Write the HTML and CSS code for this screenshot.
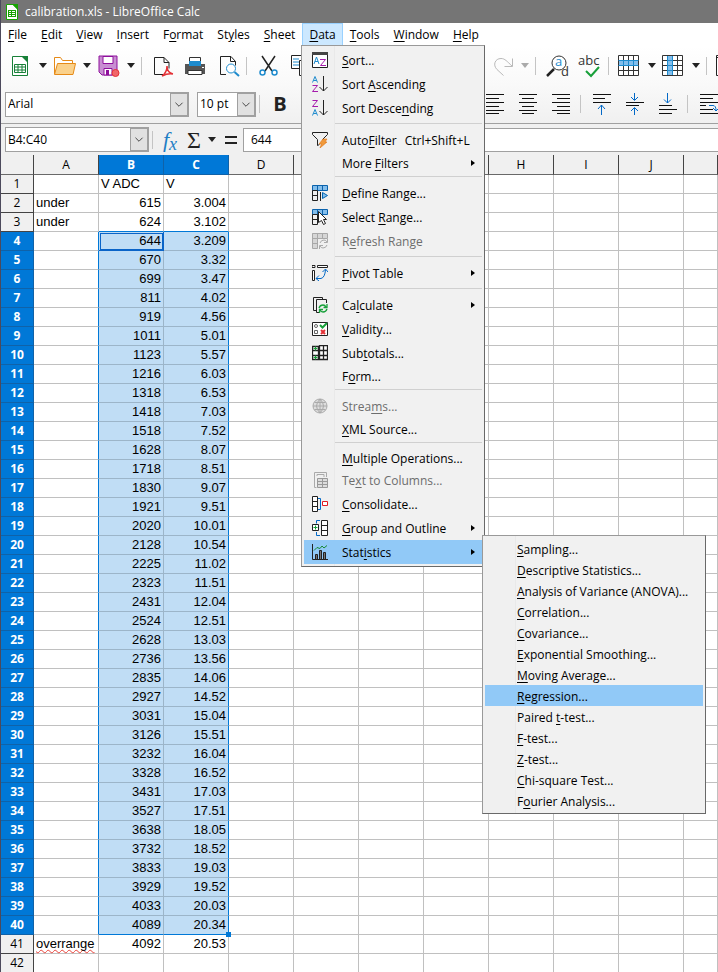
FILE: index.html
```html
<!DOCTYPE html>
<html lang="en">
<head>
<meta charset="utf-8">
<title>calibration.xls - LibreOffice Calc</title>
<link rel="stylesheet" href="styles.css">
</head>
<body>
<div class="window">
<header class="titlebar">
  <svg class="app-icon" width="12" height="16" viewBox="0 0 12 16"><path d="M.5.5H7l4.500 4.500v10.500H.5z" fill="#fff" stroke="#18a303"/><path d="M6 0h6v6z" fill="#18a303"/><path d="M2 6h8v7H2z" fill="#18a303"/><path d="M3 7h2v1H3zM6 7h3v1H6zM3 9h2v1H3zM6 9h3v1H6zM3 11h2v1H3zM6 11h3v1H6z" fill="#fff"/></svg>
  <span>calibration.xls - LibreOffice Calc</span>
</header>

<nav class="menubar">
  <button><u>F</u>ile</button><button><u>E</u>dit</button><button><u>V</u>iew</button><button><u>I</u>nsert</button><button>F<u>o</u>rmat</button><button>St<u>y</u>les</button><button><u>S</u>heet</button><button class="open"><u>D</u>ata</button><button><u>T</u>ools</button><button><u>W</u>indow</button><button><u>H</u>elp</button>
</nav>

<div class="toolbar standard">
  <div class="tools">
    <button class="icon" aria-label="New"><svg viewBox="0 0 24 24"><path d="M3.500 2.500H14l4.500 5v14h-15z" fill="#fff" stroke="#188038"/><path d="M12 2h7v7z" fill="#188038"/><path d="M5.500 10.500h11v8h-11zM5.500 13h11M5.500 16h11M9 10.500v8M13 10.500v8" fill="none" stroke="#188038"/></svg></button>
    <button class="drop" aria-label="New options"></button>
    <button class="icon" aria-label="Open"><svg viewBox="0 0 24 24"><path d="M1.500 20V3.500h6l2 3h10v4" fill="#fff" stroke="#e68a17"/><path d="M1.500 20.500l3-11H22.500l-2.500 11z" fill="#fad18b" stroke="#e68a17"/></svg></button>
    <button class="drop" aria-label="Open options"></button>
    <button class="icon" aria-label="Save"><svg viewBox="0 0 24 24"><path d="M2 2h18v19H5l-3-3z" fill="#c88fd2" stroke="#8f109c"/><path d="M6 2.500h10v7H6z" fill="#fff" stroke="#8f109c"/><path d="M7 14.500h8V21H7z" fill="#fff" stroke="#8f109c"/><path d="M9 16h3v5H9z" fill="#8f109c"/><circle cx="18.500" cy="19" r="3.500" fill="#f0666a" stroke="#e43136"/></svg></button>
    <button class="drop" aria-label="Save options"></button>
    <i class="sep"></i>
    <button class="icon" aria-label="Export as PDF"><svg viewBox="0 0 24 24"><path d="M12 20.500H3.500v-17H13l5 5v6M13 3.500v5h5" fill="none" stroke="#222"/><path d="M11 22c3-2 5-6 5-10 0 4 2 7 6 8-4-1-7 0-11 2z" fill="none" stroke="#e43136" stroke-width="1.500"/></svg></button>
    <button class="icon" aria-label="Print"><svg viewBox="0 0 24 24"><path d="M6.500 10V3.500h11V10" fill="#fff" stroke="#333"/><path d="M2 10h20v10H2z" fill="#555"/><path d="M6 7h12v5H6z" fill="#1e8bcd"/><path d="M5 16.500h14v4H5z" fill="#fff" stroke="#333"/><path d="M19 13h2v1h-2z" fill="#fff"/></svg></button>
    <button class="icon" aria-label="Print Preview"><svg viewBox="0 0 24 24"><path d="M11 20.500H5.500v-18H16l4.500 5v4M15.500 2.500v5h5" fill="none" stroke="#222"/><circle cx="16" cy="14.500" r="4.500" fill="#fff" stroke="#1e8bcd"/><path d="M19.500 18l4.500 4" stroke="#1e8bcd" stroke-width="2"/></svg></button>
    <i class="sep end"></i>
    <button class="icon" aria-label="Cut"><svg viewBox="0 0 24 24"><path d="M6 2l10 15M19 2L9 17" stroke="#222" stroke-width="1.500"/><circle cx="6.500" cy="18.500" r="2.500" fill="#fff" stroke="#1e8bcd" stroke-width="1.500"/><circle cx="18.500" cy="18.500" r="2.500" fill="#fff" stroke="#1e8bcd" stroke-width="1.500"/></svg></button>
    <button class="icon" aria-label="Copy"><svg viewBox="0 0 24 24"><path d="M3.500 1.500h10v13h-10z" fill="#fff" stroke="#222"/><path d="M5 5h6M5 8h6M5 11h6" stroke="#1e8bcd"/><path d="M11.500 6.500h10v15h-10z" fill="#fff" stroke="#222"/></svg></button>
  </div>
  <div class="tools">
    <button class="icon" aria-label="Redo"><svg viewBox="0 0 24 24"><path d="M12.500 21.500L6 15.500C1.500 11 4 4.500 10 4.500c4 0 6 3 11 7.500M21.500 4.500v8h-8" fill="none" stroke="#b9b9b9"/></svg></button>
    <button class="drop off" aria-label="Redo options"></button>
    <i class="sep"></i>
    <button class="icon" aria-label="Find and Replace"><svg viewBox="0 0 24 24"><path d="M9 15l-7 7" stroke="#222" stroke-width="2.500"/><circle cx="14" cy="9" r="7" fill="#fff" stroke="#333"/><text x="10" y="12" class="t-blue">a</text><text x="16" y="22" class="t-dark">d</text></svg></button>
    <button class="icon" aria-label="Spelling"><svg viewBox="0 0 24 24"><text x="1" y="11" class="t-dark">abc</text><path d="M9 17l5 5 8-9" fill="none" stroke="#18a03a" stroke-width="2"/></svg></button>
    <i class="sep end"></i>
    <button class="icon" aria-label="Row"><svg viewBox="0 0 24 24"><path d="M.5 1.500h20v20H.5z" fill="#fff"/><path d="M1 6h20v6H1z" fill="#83beec"/><path d="M.5 1.500h20v20H.5zM.5 6.500h20M.5 11.500h20M.5 16.500h20M5.500 1.500v20M10.500 1.500v20M15.500 1.500v20" fill="none" stroke="#333"/><path d="M.5 6.500h20M.5 11.500h20M5.500 6v6M10.500 6v6M15.500 6v6" stroke="#1e8bcd"/></svg></button>
    <button class="drop" aria-label="Row options"></button>
    <button class="icon" aria-label="Column"><svg viewBox="0 0 24 24"><path d="M.5 1.500h20v20H.5z" fill="#fff"/><path d="M5 2h6v20H5z" fill="#83beec"/><path d="M.5 1.500h20v20H.5zM.5 6.500h20M.5 11.500h20M.5 16.500h20M5.500 1.500v20M10.500 1.500v20M15.500 1.500v20" fill="none" stroke="#333"/><path d="M5.500 2v19M10.500 2v19M5 6.500h6M5 11.500h6M5 16.500h6" stroke="#1e8bcd"/></svg></button>
    <button class="drop" aria-label="Column options"></button>
    <i class="sep"></i>
    <button class="icon" aria-label="Sort"><svg viewBox="0 0 24 24"><path d="M.5 1.500h20v20H.5zM.5 3.500h20" fill="#fff" stroke="#222"/></svg></button>
  </div>
</div>

<div class="toolbar formatting">
  <div class="tools">
    <label class="combo font"><select aria-label="Font Name"><option>Arial</option></select><svg viewBox="0 0 18 22"><path d="M5 9l4 4 4-4" fill="none" stroke="#333"/></svg></label>
    <label class="combo size"><select aria-label="Font Size"><option>10 pt</option></select><svg viewBox="0 0 18 22"><path d="M5 9l4 4 4-4" fill="none" stroke="#333"/></svg></label>
    <i class="sep"></i>
    <button class="bold" aria-label="Bold">B</button>
  </div>
  <div class="tools align">
    <button class="icon" aria-label="Align Left"><svg viewBox="0 0 24 24"><path d="M3 2.500h18M3 6.500h13M3 10.500h18M3 14.500h13M3 18.500h18M3 21.500h13" stroke="#111"/></svg></button>
    <button class="icon" aria-label="Center"><svg viewBox="0 0 24 24"><path d="M3 2.500h18M6 6.500h12M3 10.500h18M6 14.500h12M3 18.500h18M6 21.500h12" stroke="#111"/></svg></button>
    <button class="icon" aria-label="Align Right"><svg viewBox="0 0 24 24"><path d="M3 2.500h18M8 6.500h13M3 10.500h18M8 14.500h13M3 18.500h18M8 21.500h13" stroke="#111"/></svg></button>
    <i class="sep end"></i>
    <button class="icon" aria-label="Align Top"><svg viewBox="0 0 24 24"><path d="M3 2.500h18M3 6.500h12M3 10.500h18" stroke="#111"/><path d="M11.500 23V13M8 17l3.500-4 3.500 4" fill="none" stroke="#0369c7"/></svg></button>
    <button class="icon" aria-label="Center Vertically"><svg viewBox="0 0 24 24"><path d="M3 10.500h18M3 13.500h13" stroke="#111"/><path d="M11.500 1v7M8 5l3.500 3.500L15 5M11.500 23v-7M8 19l3.500-3.500L15 19" fill="none" stroke="#0369c7"/></svg></button>
    <button class="icon" aria-label="Align Bottom"><svg viewBox="0 0 24 24"><path d="M3 13.500h13M3 17.500h18M3 21.500h13" stroke="#111"/><path d="M11.500 1v10M8 7.500l3.500 3.500L15 7.500" fill="none" stroke="#0369c7"/></svg></button>
    <i class="sep end"></i>
    <button class="icon" aria-label="Wrap Text"><svg viewBox="0 0 24 24"><path d="M3 2.500h20M3 6.500h13M3 10.500h20M3 13.500h6M3 17.500h13M3 21.500h20" stroke="#111"/><path d="M12 13.500h4q3 0 3 5M16 16l3 3 3-3" fill="none" stroke="#0369c7"/></svg></button>
  </div>
</div>

<div class="formulabar">
  <label class="combo name"><select aria-label="Name Box"><option>B4:C40</option></select><svg viewBox="0 0 18 22"><path d="M5 9l4 4 4-4" fill="none" stroke="#333"/></svg></label>
  <i class="sep"></i>
  <button class="fx" aria-label="Function Wizard">f<sub>x</sub></button>
  <button class="sum" aria-label="Select Function">Σ</button>
  <button class="drop" aria-label="Function options"></button>
  <button class="eq" aria-label="Formula"></button>
  <input class="formula" aria-label="Input line" value="644">
</div>

<main class="sheet">
  <table>
    <colgroup><col class="rowhead"><col span="10" class="std"><col></colgroup>
    <thead><tr><th></th><th>A</th><th class="on">B</th><th class="on">C</th><th>D</th><th>E</th><th>F</th><th>G</th><th>H</th><th>I</th><th>J</th><th></th></tr></thead>
    <tbody id="rows"></tbody>
  </table>
</main>

<div class="popup data-menu" role="menu">
  <button class="item"><svg viewBox="0 0 16 16"><path d="M.5.5h15v15H.5z" fill="#fff" stroke="#222"/><path d="M0 0h16v3H0z" fill="#444"/><path d="M2 12l2.500-7L7 12M3 9.500h3" fill="none" stroke="#1e8bcd"/><path d="M8 7.500h5.500L8.500 13.500H14" fill="none" stroke="#a51bac"/></svg><span><u>S</u>ort...</span></button>
  <button class="item"><svg viewBox="0 0 16 16"><path d="M.5 6.500L3 .5l2.500 6M1.500 4.500h3" fill="none" stroke="#1e8bcd"/><path d="M.5 9.500h5l-5 6H6" fill="none" stroke="#a51bac"/><path d="M11.500 0v15M7.500 11l4 4 4-4" fill="none" stroke="#222"/></svg><span>Sort <u>A</u>scending</span></button>
  <button class="item"><svg viewBox="0 0 16 16"><path d="M.5.5h5l-5 6H6" fill="none" stroke="#a51bac"/><path d="M.5 15.500L3 9.500l2.500 6M1.500 13.500h3" fill="none" stroke="#1e8bcd"/><path d="M11.500 0v15M7.500 11l4 4 4-4" fill="none" stroke="#222"/></svg><span>Sort Desce<u>n</u>ding</span></button>
  <hr>
  <button class="item"><svg viewBox="0 0 16 16"><path d="M.5.500h15v2l-5 5M.5.500v2l5 5v6l2-1" fill="none" stroke="#222"/><path d="M11 7h4l-2 3h2l-7 6 1.500-4H7z" fill="#f09a3c" stroke="#e07312" stroke-width=".6"/></svg><span>Auto<u>F</u>ilter</span><span class="key">Ctrl+Shift+L</span></button>
  <button class="item plain sub"><span>More <u>F</u>ilters</span></button>
  <hr>
  <button class="item"><svg viewBox="0 0 16 16"><path d="M.5.500h15v5H.5zM5.500.500v5M10.500.500v5" fill="#83beec" stroke="#0b63ad"/><path d="M.5 5.500h5v10h-5zM.5 10.500h5M8.500 7v9" fill="none" stroke="#222"/><path d="M10.500 7.500l5 3-5 3z" fill="#83beec" stroke="#0063b1"/></svg><span><u>D</u>efine Range...</span></button>
  <button class="item"><svg viewBox="0 0 16 16"><path d="M.5.500h15v5H.5zM5.500.500v5M10.500.500v5" fill="#83beec" stroke="#0b63ad"/><path d="M.5 5.500h5v10h-5zM.5 10.500h5" fill="none" stroke="#222"/><path d="M6.500 2.500l8 8h-3l2 4-2 1-2-4-3 2z" fill="#fff" stroke="#222"/></svg><span>Select <u>R</u>ange...</span></button>
  <button class="item" disabled><svg viewBox="0 0 16 16"><path d="M.5.500h15v5H.5zM5.500.500v15H.5V.5M10.500.500v5M.5 10.500h5" fill="#d6d6d6" stroke="#a8a8a8"/><path d="M8 10q1-3 4-3 2 0 3 2M15.500 6v3.500H12M15 12q-1 3-4 3-2 0-3-2M7.500 16v-3.500H11" fill="none" stroke="#aaa"/></svg><span>R<u>e</u>fresh Range</span></button>
  <hr>
  <button class="item sub"><svg viewBox="0 0 16 16"><path d="M0 .500h3v2H0zM5.500.500h10v2h-10zM.5 5.500h2v10h-2z" fill="#fff" stroke="#222"/><path d="M4 13.500h5q4-1 4.500-9M10.500 7l3-3 2.500 3M7 10.500l-3 3L7 16" fill="none" stroke="#0369c7"/></svg><span><u>P</u>ivot Table</span></button>
  <hr>
  <button class="item sub"><svg viewBox="0 0 16 16"><path d="M4.500 13.500h-3V.500h9v2M7 15.500H4.500V2.500h10V6" fill="none" stroke="#222"/><path d="M7 11q1-3 4-3 2 0 3 2M15 7v3.500h-3.500M15 12q-1 3-4 3-2 0-3-2M7.500 16v-3.500H11" fill="none" stroke="#18a03a" stroke-width="1.300"/></svg><span>Ca<u>l</u>culate</span></button>
  <button class="item"><svg viewBox="0 0 16 16"><path d="M.5 1.500h15v13H.5z" fill="#fff" stroke="#222"/><circle cx="4" cy="5" r="1.500" fill="none" stroke="#666"/><path d="M2.500 9.500h3v3h-3z" fill="none" stroke="#666"/><path d="M8 4l2.500 2.500L15 2" fill="none" stroke="#18a03a" stroke-width="2"/><path d="M9 9l4 4M13 9l-4 4" stroke="#e43136" stroke-width="2"/></svg><span><u>V</u>alidity...</span></button>
  <button class="item"><svg viewBox="0 0 16 16"><path d="M.5 1.500h7v13h-7zM8 .500h7.500v14H8z" fill="#fff"/><path d="M.5 1.500h6v13h-6zM.5 5.500h15M.5 10.500h15M7.500.500h8v14h-8zM11.500.500v14" fill="none" stroke="#222" stroke-width="1.300"/><path d="M1.500 3.500h4M3.500 1.500v4M1.500 12.500h4M3.500 10.500v4" stroke="#18a03a"/></svg><span>Sub<u>t</u>otals...</span></button>
  <button class="item plain"><span>F<u>o</u>rm...</span></button>
  <hr>
  <button class="item" disabled><svg viewBox="0 0 16 16"><circle cx="8" cy="8" r="7" fill="#ddd" stroke="#aaa"/><path d="M1 8h14M8 1v14M2.500 4.500h11M2.500 11.500h11M8 1q-7 7 0 14M8 1q7 7 0 14" fill="none" stroke="#aaa"/></svg><span>Strea<u>m</u>s...</span></button>
  <button class="item plain"><span><u>X</u>ML Source...</span></button>
  <hr>
  <button class="item plain"><span><u>M</u>ultiple Operations...</span></button>
  <button class="item" disabled><svg viewBox="0 0 16 16"><path d="M4.500 15.500h-2V.500h12V5" fill="none" stroke="#aaa"/><path d="M5 4V2.500h7V5" fill="none" stroke="#aaa"/><path d="M5.500 6.500h10v9h-10zM5.500 9.500h10M5.500 12.500h10M10.500 6.500v9" fill="#ddd" stroke="#999"/></svg><span>Te<u>x</u>t to Columns...</span></button>
  <button class="item"><svg viewBox="0 0 16 16"><path d="M.5.500h5v15h-5zM.5 5.500h5M.5 10.500h5" fill="#fff" stroke="#222"/><path d="M6 2.500h2.500v11H6" fill="none" stroke="#0369c7"/><path d="M10.500 5.500h5v4h-5z" fill="#fff" stroke="#e01b24"/></svg><span><u>C</u>onsolidate...</span></button>
  <button class="item sub"><svg viewBox="0 0 16 16"><path d="M9.500.500h6v15h-6zM9.500 5.500h6M9.500 10.500h6" fill="#fff" stroke="#222"/><path d="M8 .500H4.500v3M4.500 12v3.500H8" fill="none" stroke="#0369c7"/><path d="M.5 4.500h6v6h-6z" fill="#fff" stroke="#222"/><path d="M1.500 7.500h4M3.500 5.500v4" stroke="#18a03a"/></svg><span><u>G</u>roup and Outline</span></button>
  <button class="item sub hot"><svg viewBox="0 0 16 16"><path d="M.5 0v15.500H16" fill="none" stroke="#222"/><path d="M3.500 10.500h2v5h-2zM7.500 6.500h2v9h-2zM11.500 8.500h2v7h-2z" fill="#777" stroke="#222"/><path d="M2 6.500l3-3 3 1 2-2.500 2 2 3-2.500" fill="none" stroke="#188a34"/></svg><span>Stat<u>i</u>stics</span></button>
</div>

<div class="popup stats-menu" role="menu">
  <button class="item plain"><span><u>S</u>ampling...</span></button>
  <button class="item plain"><span><u>D</u>escriptive Statistics...</span></button>
  <button class="item plain"><span><u>A</u>nalysis of Variance (ANOVA)...</span></button>
  <button class="item plain"><span><u>C</u>orrelation...</span></button>
  <button class="item plain"><span><u>C</u>ovariance...</span></button>
  <button class="item plain"><span><u>E</u>xponential Smoothing...</span></button>
  <button class="item plain"><span><u>M</u>oving Average...</span></button>
  <button class="item plain hot"><span><u>R</u>egression...</span></button>
  <button class="item plain"><span>Paired <u>t</u>-test...</span></button>
  <button class="item plain"><span><u>F</u>-test...</span></button>
  <button class="item plain"><span><u>Z</u>-test...</span></button>
  <button class="item plain"><span><u>C</u>hi-square Test...</span></button>
  <button class="item plain"><span>F<u>o</u>urier Analysis...</span></button>
</div>
</div>
<script src="sheet.js"></script>
</body>
</html>
```
FILE: styles.css
```css
* { box-sizing: border-box; }

body {
  margin: 0;
  background: #fff;
  color: #000;
  font: 12px/16px "Open Sans", "Noto Sans", sans-serif;
}

button {
  border: 0;
  padding: 0;
  background: none;
  color: inherit;
  font: inherit;
}

u { text-underline-offset: 2px; text-decoration-thickness: 1px; }

.window {
  position: relative;
  height: 100vh;
  overflow: hidden;
  display: flex;
  flex-direction: column;
  border-left: 1px solid #4c4a5c;
  background: #f0f0f0;
}

.titlebar {
  flex: none;
  display: flex;
  align-items: center;
  gap: 7px;
  height: 23px;
  padding-left: 5px;
  background: #757575;
  color: #fff;
}

.menubar {
  flex: none;
  display: flex;
  height: 23px;
  background: #fff;
}
.menubar button { padding: 0 6px; border: 1px solid transparent; white-space: nowrap; }
.menubar .open { background: #cce8ff; border-color: #99d1ff; }

.toolbar { flex: none; display: grid; height: 39px; }
.standard { grid-template-columns: 490px 1fr; background: linear-gradient(#fff, #f9f9f9); }
.formatting { grid-template-columns: 482px 1fr; background: linear-gradient(#f9f9f9, #f0f0f0); border-bottom: 1px solid #a0a0a0; }
.tools { display: flex; align-items: center; min-width: 0; overflow: hidden; }
.standard .tools:first-child { padding-left: 8px; }
.formatting .tools:first-child { padding-left: 4px; }

.icon { flex: none; width: 24px; height: 24px; }
.icon svg { display: block; width: 24px; height: 24px; overflow: visible; }
.icon + .icon { margin-left: 8px; }
.align .icon + .icon { margin-left: 9px; }
.t-blue, .t-dark { font: 13px "Open Sans", sans-serif; }
.t-blue { fill: #1e8bcd; }
.t-dark { fill: #333; }

.drop { flex: none; display: grid; place-items: center; width: 20px; height: 24px; }
.drop::after {
  content: "";
  border: 4px solid transparent;
  border-top: 5px solid #222;
  border-bottom: 0;
}
.drop.off::after { border-top-color: #aaa; }

.sep { flex: none; width: 1px; height: 18px; margin-right: 9px; background: #c4c4c4; }
.sep.end { margin-left: 7px; }

.combo { flex: none; display: grid; height: 25px; border: 1px solid #a0a0a0; background: #fff; }
.combo select {
  grid-area: 1 / 1;
  appearance: none;
  border: 0;
  padding: 0 0 0 2px;
  background: none;
  color: #000;
  font: inherit;
}
.combo svg {
  grid-area: 1 / 1;
  justify-self: end;
  width: 18px;
  height: 23px;
  border: 1px solid #a0a0a0;
  background: #e1e1e1;
  pointer-events: none;
}
.font { width: 184px; }
.size { width: 59px; margin: 0 3px 0 8px; }
.bold { width: 22px; font-size: 20px; line-height: 24px; font-weight: 700; color: #222; }

.formulabar {
  flex: none;
  display: flex;
  align-items: center;
  height: 31px;
  padding-left: 4px;
}
.formulabar .sep { margin-right: 8px; }
.formulabar .drop { width: 18px; }
.name { width: 144px; margin-right: 3px; }
.fx, .sum { width: 18px; font: 22px/24px "Liberation Serif", serif; }
.fx { color: #1e7ec4; font-style: italic; }
.fx sub { font-size: 18px; line-height: 0; vertical-align: -3px; }
.sum { margin-left: 6px; font-size: 24px; color: #222; }
.eq { width: 12px; height: 8px; margin: 0 6px 0 4px; border: solid #222; border-width: 2px 0; }
.formula {
  flex: 1;
  min-width: 0;
  height: 24px;
  border: 1px solid #a0a0a0;
  border-right: 0;
  padding: 0 7px;
  font: inherit;
}

.sheet { flex: 1; min-height: 0; overflow: hidden; background: #fff; }
.sheet table { width: 100%; border-collapse: separate; border-spacing: 0; table-layout: fixed; }
.rowhead { width: 33px; }
.std { width: 65px; }
.sheet th {
  height: 19px;
  padding: 0;
  border: solid #444;
  border-width: 0 1px 1px 0;
  background: #f0f0f0;
  font-weight: 400;
  line-height: 18px;
}
.sheet thead th { height: 20px; border-bottom-color: #696969; }
.sheet th.on { background: #0078d7; border-color: #1062a8; color: #fff; font-weight: 700; }
.sheet td {
  height: 19px;
  padding: 0 2px;
  border: solid #c0c0c0;
  border-width: 0 1px 1px 0;
  font: 13px/18px "Liberation Sans", Arial, sans-serif;
  white-space: nowrap;
}
.sheet .num { text-align: right; }
.sheet .sel { background: #c0ddf5; border-color: #9cb5c9; }
.sheet .edge-right { border-right-color: #0078d7; }
.sheet .edge-bottom { border-bottom-color: #0078d7; }
.sheet .active { outline: 1px solid #0a64c8; outline-offset: -2px; border-color: #0a64c8; }
.sheet .corner { position: relative; }
.sheet .corner::after {
  content: "";
  position: absolute;
  right: -3px;
  bottom: -3px;
  width: 5px;
  height: 5px;
  background: #0078d7;
}
.misspelt { text-decoration: underline wavy #e8423a 1px; text-underline-offset: 1px; text-decoration-skip-ink: none; }

.popup {
  position: absolute;
  padding: 2px;
  border: 1px solid #999;
  border-right-color: #696969;
  border-bottom-color: #696969;
  background: linear-gradient(90deg, #f0f0f0 32px, #e9e9e9 32px, #e9e9e9 33px, #f1f1f1 33px);
}
.data-menu { left: 300px; top: 45px; width: 184px; }
.stats-menu { left: 481px; top: 535px; width: 224px; }
.item {
  display: flex;
  align-items: center;
  width: 100%;
  height: 24px;
  padding: 0 7px 0 8px;
  text-align: left;
  white-space: nowrap;
}
.item span { padding-top: 2px; }
.item svg { flex: none; width: 16px; height: 16px; margin-right: 14px; }
.item.plain { height: 21px; padding-left: 38px; }
.stats-menu .item.plain { padding-left: 32px; }
.item:disabled { color: #6d6d6d; }
.item .key { margin-left: 8px; }
.item.sub::after {
  content: "";
  margin-left: auto;
  border: 3px solid transparent;
  border-left: 4px solid #000;
  border-right: 0;
}
.item.hot { background: #91c9f7; }
.popup hr { height: 8px; margin: 0 0 0 31px; border: 0; background: linear-gradient(#d0d0d0, #d0d0d0) 0 3px / 100% 1px no-repeat; }
```
FILE: sheet.js
```js
const columnCount = 11;
const firstSelected = 4;
const lastSelected = 40;

const rows = [
  ["", "V ADC", "V"],
  ["under", "615", "3.004"],
  ["under", "624", "3.102"],
  ["", "644", "3.209"], ["", "670", "3.32"], ["", "699", "3.47"],
  ["", "811", "4.02"], ["", "919", "4.56"], ["", "1011", "5.01"],
  ["", "1123", "5.57"], ["", "1216", "6.03"], ["", "1318", "6.53"],
  ["", "1418", "7.03"], ["", "1518", "7.52"], ["", "1628", "8.07"],
  ["", "1718", "8.51"], ["", "1830", "9.07"], ["", "1921", "9.51"],
  ["", "2020", "10.01"], ["", "2128", "10.54"], ["", "2225", "11.02"],
  ["", "2323", "11.51"], ["", "2431", "12.04"], ["", "2524", "12.51"],
  ["", "2628", "13.03"], ["", "2736", "13.56"], ["", "2835", "14.06"],
  ["", "2927", "14.52"], ["", "3031", "15.04"], ["", "3126", "15.51"],
  ["", "3232", "16.04"], ["", "3328", "16.52"], ["", "3431", "17.03"],
  ["", "3527", "17.51"], ["", "3638", "18.05"], ["", "3732", "18.52"],
  ["", "3833", "19.03"], ["", "3929", "19.52"], ["", "4033", "20.03"],
  ["", "4089", "20.34"],
  ["overrange", "4092", "20.53"],
  []
];

const body = document.getElementById("rows");
rows.forEach((values, index) => {
  const number = index + 1;
  const selected = number >= firstSelected && number <= lastSelected;
  const tr = body.insertRow();
  const head = document.createElement("th");
  head.textContent = number;
  head.classList.toggle("on", selected);
  tr.append(head);
  for (let c = 0; c < columnCount; c++) {
    const td = tr.insertCell();
    const text = values[c] || "";
    const inRange = c === 1 || c === 2;
    if (text === "overrange") {
      const word = document.createElement("span");
      word.className = "misspelt";
      word.textContent = text;
      td.append(word);
    } else {
      td.textContent = text;
    }
    if (text && !isNaN(text)) td.classList.add("num");
    if (selected && inRange) td.classList.add("sel");
    if (selected && (c === 0 || c === 2)) td.classList.add("edge-right");
    if (inRange && (number === firstSelected - 1 || number === lastSelected)) td.classList.add("edge-bottom");
    if (number === firstSelected && c === 1) td.classList.add("active");
    if (number === lastSelected && c === 2) td.classList.add("corner");
  }
});
```
